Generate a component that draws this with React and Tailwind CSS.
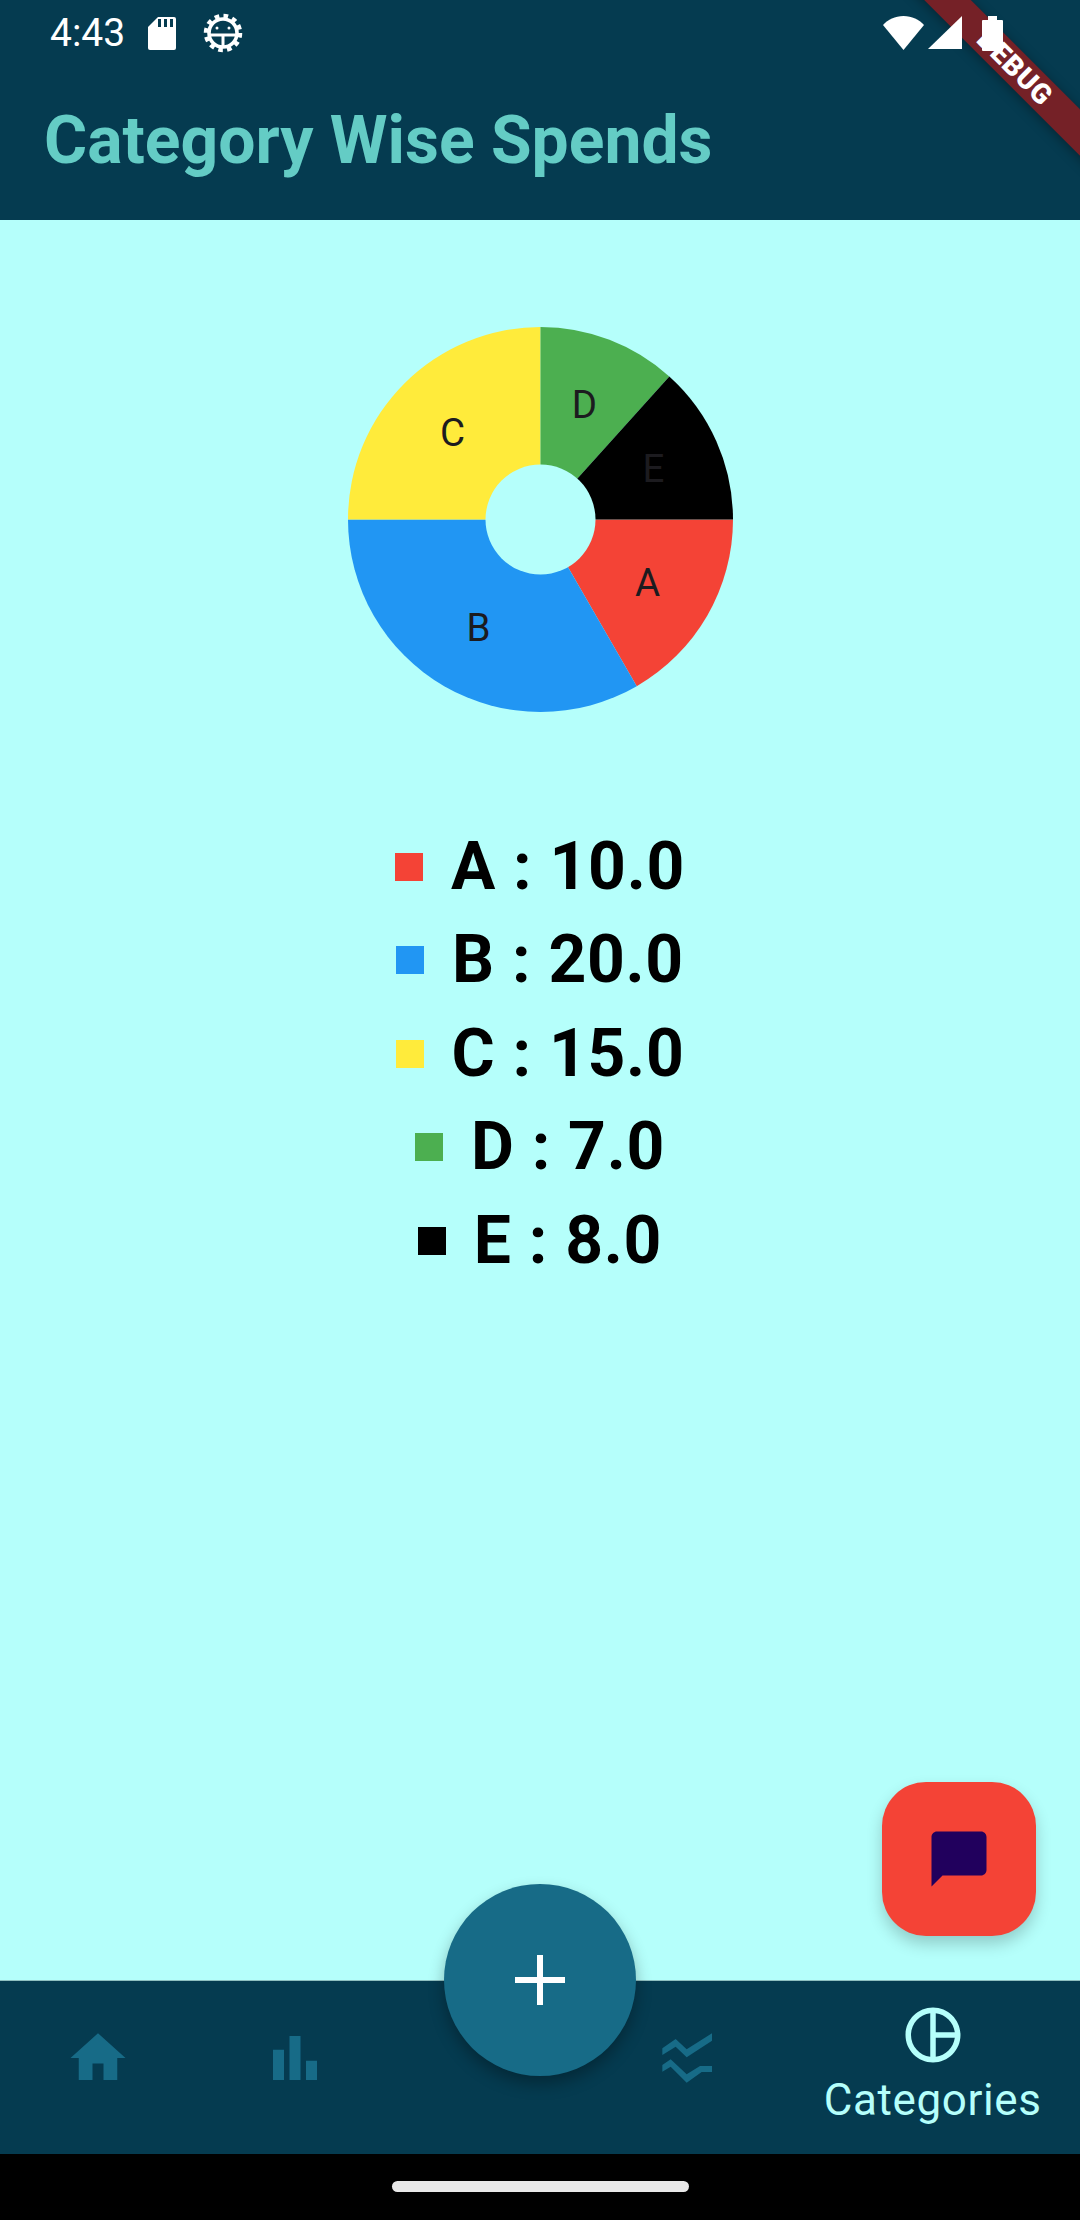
const BAR = 'bg-[#053B50]';

const SLICES = [
  { label: 'A', value: 10, color: '#F44336', x: 647, y: 582 },
  { label: 'B', value: 20, color: '#2196F3', x: 478, y: 627 },
  { label: 'C', value: 15, color: '#FFEB3B', x: 452, y: 432 },
  { label: 'D', value: 7, color: '#4CAF50', x: 584, y: 404 },
  { label: 'E', value: 8, color: '#000000', x: 653, y: 468 },
];

function slicePaths() {
  const total = SLICES.reduce((sum, s) => sum + s.value, 0);
  let angle = 0;
  return SLICES.map((s) => {
    const next = angle + (s.value / total) * Math.PI * 2;
    const r = 192.5;
    const x1 = 192.5 + r * Math.cos(angle);
    const y1 = 192.5 + r * Math.sin(angle);
    const x2 = 192.5 + r * Math.cos(next);
    const y2 = 192.5 + r * Math.sin(next);
    const large = next - angle > Math.PI ? 1 : 0;
    angle = next;
    return { ...s, d: `M192.5 192.5L${x1} ${y1}A${r} ${r} 0 ${large} 1 ${x2} ${y2}Z` };
  });
}

function PieChart() {
  return (
    <svg width="385" height="385" viewBox="0 0 385 385" className="block">
      {slicePaths().map((s) => (
        <path key={s.label} d={s.d} fill={s.color} />
      ))}
      <circle cx="192.5" cy="192.5" r="55" fill="#B5FFFB" />
      {SLICES.map((s) => (
        <text
          key={s.label}
          x={s.x - 347.5}
          y={s.y - 327.5 + 14}
          textAnchor="middle"
          fontSize="38.5"
          fill="#1C1B1F"
          fontFamily="Roboto"
        >
          {s.label}
        </text>
      ))}
    </svg>
  );
}

function GearIcon() {
  return (
    <svg width="42" height="42" viewBox="0 0 42 42" fill="none" stroke="white">
      <circle cx="21" cy="21" r="17" strokeWidth="4.500" strokeDasharray="4.600 4.300" />
      <circle cx="21" cy="21" r="14" strokeWidth="3.600" />
      <path d="M7 23h28M21 23v12" strokeWidth="3" />
      <circle cx="15" cy="16" r="1.500" fill="white" stroke="none" />
      <circle cx="27" cy="16" r="1.500" fill="white" stroke="none" />
    </svg>
  );
}

function StatusBar() {
  return (
    <div className="relative z-30 h-[66px] flex items-center pl-[50px] text-white">
      <span className="text-[39px] leading-none font-normal mt-[1px] w-[98px]">4:43</span>
      <svg width="28" height="34" viewBox="0 0 28 34">
        <path d="M10 1h16a2 2 0 0 1 2 2v29a2 2 0 0 1-2 2H2a2 2 0 0 1-2-2V11z" fill="white" />
        <path d="M10 3h3v8h-3zM16 3h3v8h-3zM22 3h3v8h-3z" fill="#053B50" />
      </svg>
      <div className="ml-[26px]">
        <GearIcon />
      </div>
      <div className="ml-auto flex items-start mr-[77px]">
        <svg width="41" height="34" viewBox="0 0 41 34" fill="white">
          <path d="M20.5 34L0 9C5 3.500 12 0 20.500 0S36 3.500 41 9z" />
        </svg>
        <svg width="34" height="34" viewBox="0 0 34 34" fill="white" className="ml-[4px]">
          <path d="M34 0v33H0z" />
        </svg>
        <svg width="21" height="35" viewBox="0 0 21 35" fill="white" className="ml-[20px]">
          <path d="M6 0h9v4h5a1 1 0 0 1 1 1v29a1 1 0 0 1-1 1H1a1 1 0 0 1-1-1V5a1 1 0 0 1 1-1h5z" />
        </svg>
      </div>
    </div>
  );
}

function DebugBanner() {
  return (
    <div className="absolute z-20 left-[814px] top-[49.5px] w-[400px] h-[33px] rotate-45 bg-[#752127] shadow-[0_2px_12px_rgba(0,0,0,0.35)] flex items-center justify-center">
      <span className="text-white text-[28px] leading-none font-black tracking-[0.8px] ml-[3px]">DEBUG</span>
    </div>
  );
}

function LegendRow({ slice }) {
  return (
    <div className="h-[93.5px] flex items-center justify-center gap-[28px]">
      <span className="w-[28px] h-[28px]" style={{ backgroundColor: slice.color }} />
      <span className="text-[66px] leading-none font-bold text-black whitespace-pre tracking-[0.7px]">
        {slice.label} : {slice.value.toFixed(1)}
      </span>
    </div>
  );
}

function NavIcon({ d, color = '#176B87' }) {
  return (
    <svg width="66" height="66" viewBox="0 0 24 24" fill={color}>
      <path d={d} />
    </svg>
  );
}

function BottomNav() {
  return (
    <div className={`h-[174px] flex border-t border-[#8FBFC0] ${BAR}`}>
      <div className="flex-[2] flex justify-center pt-[44px]">
        <NavIcon d="M10 20v-6h4v6h5v-8h3L12 3 2 12h3v8z" />
      </div>
      <div className="flex-[2] flex justify-center pt-[44px]">
        <NavIcon d="M4 9h4v11H4zm12 4h4v7h-4zm-6-9h4v16h-4z" />
      </div>
      <div className="flex-[2]" />
      <div className="flex-[2] flex justify-center pt-[39px]">
        <svg width="80" height="75" viewBox="-9 0 240 225" fill="#176B87">
          <path d="M37 85L77 57l33 31 76-48v22l-76 50-33-32-40 25z" />
          <path d="M37 135l25-17 48 45 40-25h36v18h-31l-45 32-48-48-25 15z" />
        </svg>
      </div>
      <div className="flex-[3] flex flex-col items-center pt-[21px]">
        <NavIcon
          color="#B5FFFB"
          d="M12 2C6.490 2 2 6.490 2 12s4.490 10 10 10 10-4.490 10-10S17.510 2 12 2zm1 2.070c3.610.450 6.480 3.330 6.930 6.930H13V4.070zM4 12c0-4.060 3.070-7.440 7-7.930v15.870c-3.930-.500-7-3.880-7-7.940zm9 7.930V13h6.930c-.450 3.610-3.320 6.480-6.930 6.930z"
        />
        <span className="mt-[6px] text-[44px] leading-[52px] text-[#B5FFFB] tracking-[0.6px]">Categories</span>
      </div>
    </div>
  );
}

export default function App() {
  return (
    <div className="relative w-[1080px] h-[2220px] overflow-hidden flex flex-col bg-[#B5FFFB] font-['Roboto',sans-serif]">
      <DebugBanner />
      <header className={`h-[220px] shrink-0 ${BAR}`}>
        <StatusBar />
        <h1 className="pl-[44px] h-[154px] flex items-center text-[66px] font-bold text-[#64CCC5] pb-[5px]">
          Category Wise Spends
        </h1>
      </header>

      <main className="flex-1 flex flex-col items-center pt-[107px]">
        <PieChart />
        <div className="mt-[108px] w-full">
          {SLICES.map((s) => (
            <LegendRow key={s.label} slice={s} />
          ))}
        </div>
      </main>

      <BottomNav />
      <div className="h-[66px] shrink-0 bg-black flex justify-center pt-[27px]">
        <div className="w-[297px] h-[11px] rounded-full bg-[#E9E9E9]" />
      </div>

      {/* floating buttons */}
      <button className="absolute left-[444px] top-[1884px] w-[192px] h-[192px] rounded-full bg-[#176B87] flex items-center justify-center shadow-[0_8px_16px_rgba(0,0,0,0.3)]">
        <svg width="50" height="50" viewBox="0 0 50 50" fill="white">
          <path d="M22 0h6v22h22v6H28v22h-6V28H0v-6h22z" />
        </svg>
      </button>
      <button className="absolute left-[882px] top-[1782px] w-[154px] h-[154px] rounded-[44px] bg-[#F44336] flex items-center justify-center shadow-[0_8px_16px_rgba(0,0,0,0.2)]">
        <svg width="66" height="66" viewBox="0 0 24 24" fill="#21005D">
          <path d="M20 2H4c-1.100 0-2 .9-2 2v18l4-4h14c1.100 0 2-.9 2-2V4c0-1.100-.9-2-2-2z" />
        </svg>
      </button>
    </div>
  );
}
